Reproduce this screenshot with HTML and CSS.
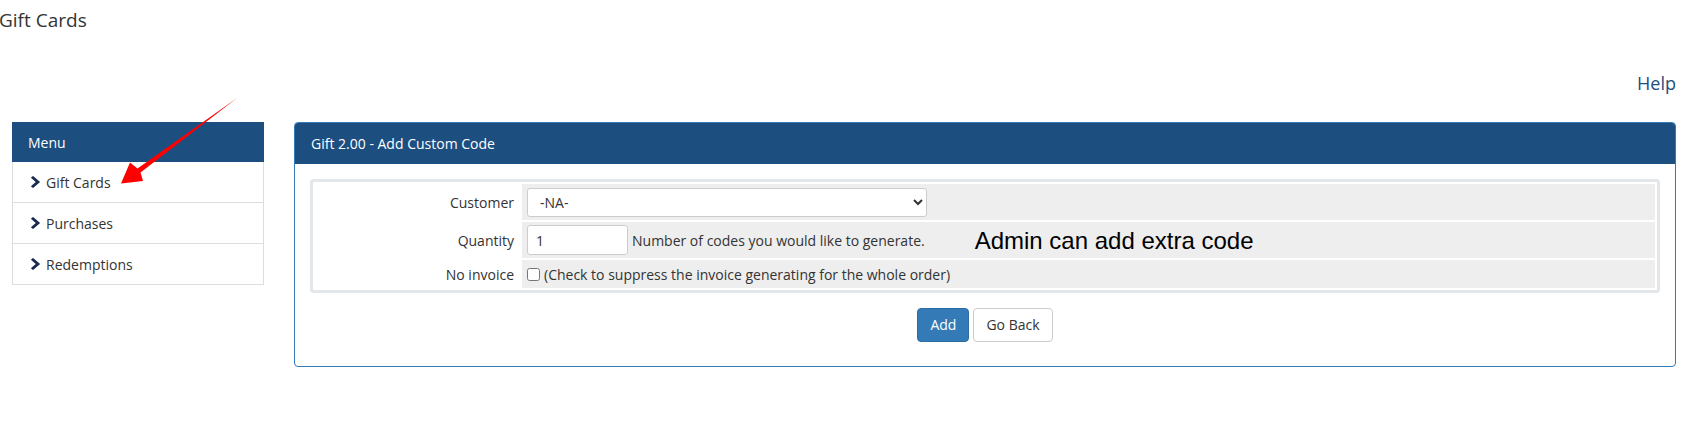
FILE: index.html
```html
<!DOCTYPE html>
<html lang="en">
<head>
<meta charset="utf-8">
<title>Gift Cards</title>
<link rel="stylesheet" href="styles.css">
</head>
<body>
<h1 class="page-title">Gift Cards</h1>
<div class="help-row"><a class="help-link" href="#">Help</a></div>
<div class="layout">
  <nav class="menu">
    <div class="menu-head">Menu</div>
    <a class="menu-item" href="#"><svg class="chev" viewBox="346 26 1036 1612" width="9" height="12" preserveAspectRatio="none"><path d="M1363 877l-742 742q-19 19-45 19t-45-19l-166-166q-19-19-19-45t19-45l531-531-531-531q-19-19-19-45t19-45l166-166q19-19 45-19t45 19l742 742q19 19 19 45t-19 45z"/></svg><span>Gift Cards</span></a>
    <a class="menu-item" href="#"><svg class="chev" viewBox="346 26 1036 1612" width="9" height="12" preserveAspectRatio="none"><path d="M1363 877l-742 742q-19 19-45 19t-45-19l-166-166q-19-19-19-45t19-45l531-531-531-531q-19-19-19-45t19-45l166-166q19-19 45-19t45 19l742 742q19 19 19 45t-19 45z"/></svg><span>Purchases</span></a>
    <a class="menu-item" href="#"><svg class="chev" viewBox="346 26 1036 1612" width="9" height="12" preserveAspectRatio="none"><path d="M1363 877l-742 742q-19 19-45 19t-45-19l-166-166q-19-19-19-45t19-45l531-531-531-531q-19-19-19-45t19-45l166-166q19-19 45-19t45 19l742 742q19 19 19 45t-19 45z"/></svg><span>Redemptions</span></a>
  </nav>
  <section class="panel">
    <div class="panel-head">Gift 2.00 - Add Custom Code</div>
    <div class="panel-body">
      <div class="form-table">
        <div class="cell-label">Customer</div>
        <div class="cell-value"><select class="select"><option>-NA-</option></select></div>
        <div class="cell-label">Quantity</div>
        <div class="cell-value"><input class="input" type="text" value="1"><span class="hint">Number of codes you would like to generate.</span><span class="annotation">Admin can add extra code</span></div>
        <div class="cell-label">No invoice</div>
        <div class="cell-value"><input class="check" type="checkbox"><span class="hint-check">(Check to suppress the invoice generating for the whole order)</span></div>
      </div>
      <div class="actions">
        <button class="btn btn-primary" type="button">Add</button>
        <button class="btn btn-default" type="button">Go Back</button>
      </div>
    </div>
  </section>
</div>
<svg class="annot-arrow" width="1684" height="427" viewBox="0 0 1684 427">
  <polygon points="237,98 140.5,172.5 143,181 121,183.5 130,162.5 137.5,168.5" />
</svg>
</body>
</html>
```

FILE: styles.css
```css
html, body {
  margin: 0;
  padding: 0;
}
body {
  position: relative;
  background: #ffffff;
  font-family: "Open Sans", "Noto Sans", "Liberation Sans", sans-serif;
  font-size: 14px;
  color: #333333;
  width: 1684px;
  height: 427px;
  overflow: hidden;
}
.page-title {
  margin: 0 0 0 -1px;
  padding-top: 9px;
  font-size: 19px;
  line-height: 22px;
  font-weight: 400;
  color: #333333;
}
.help-row {
  margin-top: 42px;
  padding-right: 8px;
  text-align: right;
  font-size: 18px;
  line-height: 20px;
}
.help-link {
  color: #1c4e80;
  text-decoration: none;
}
.layout {
  display: flex;
  align-items: flex-start;
  gap: 30px;
  margin-top: 29px;
  padding: 0 8px 0 12px;
}
.menu {
  width: 252px;
  flex: none;
  display: flex;
  flex-direction: column;
}
.menu-head {
  height: 40px;
  background: #1c4e80;
  color: #ffffff;
  padding-left: 16px;
  display: flex;
  align-items: center;
  font-size: 14px;
}
.menu-item {
  height: 40px;
  border: 1px solid #dddddd;
  border-top: none;
  display: flex;
  align-items: center;
  gap: 6px;
  padding-left: 18px;
  color: #333333;
  text-decoration: none;
  font-size: 14px;
}
.chev {
  fill: #182a50;
  flex: none;
}
.panel {
  flex: 1;
  border: 1px solid #337ab7;
  border-radius: 4px;
  overflow: hidden;
}
.panel-head {
  background: #1c4e80;
  color: #ffffff;
  height: 41px;
  padding: 0 16px;
  display: flex;
  align-items: center;
  font-size: 14px;
}
.panel-body {
  padding: 15px 15px 24px 15px;
}
.form-table {
  border: 3px solid #e3e7ea;
  border-radius: 4px;
  padding: 2px;
  display: grid;
  grid-template-columns: 205px 1fr;
  grid-template-rows: 36px 36px 28px;
  gap: 2px;
}
.cell-label {
  display: flex;
  align-items: center;
  justify-content: flex-end;
  padding-right: 6px;
  font-size: 14px;
  color: #333333;
}
.cell-value {
  background: #eeeeee;
  display: flex;
  align-items: center;
  padding-left: 5px;
  font-size: 14px;
}
.select {
  width: 400px;
  height: 29px;
  border: 1px solid #cccccc;
  border-radius: 3px;
  background: #ffffff;
  padding: 0 8px;
  font-family: "Open Sans", "Noto Sans", sans-serif;
  font-size: 14px;
  color: #333333;
  margin-top: 1px;
}
.input {
  box-sizing: border-box;
  width: 101px;
  height: 30px;
  border: 1px solid #cccccc;
  border-radius: 3px;
  padding: 0 8px;
  font-family: "Open Sans", "Noto Sans", sans-serif;
  font-size: 14px;
  color: #333333;
  background: #ffffff;
}
.hint {
  margin-left: 4px;
  color: #333333;
}
.annotation {
  margin-left: 50px;
  font-family: "Liberation Sans", Arial, sans-serif;
  font-size: 24px;
  color: #000000;
  margin-top: 2px;
}
.check {
  width: 13px;
  height: 13px;
  margin: 0 4px 0 0;
}
.hint-check {
  color: #333333;
}
.actions {
  display: flex;
  justify-content: center;
  gap: 4px;
  margin-top: 15px;
}
.btn {
  font-family: "Open Sans", "Noto Sans", sans-serif;
  font-size: 14px;
  line-height: 20px;
  padding: 6px 12px;
  border-radius: 4px;
  cursor: pointer;
}
.btn-primary {
  background: #337ab7;
  border: 1px solid #2e6da4;
  color: #ffffff;
}
.btn-default {
  background: #ffffff;
  border: 1px solid #cccccc;
  color: #333333;
}
.annot-arrow {
  position: absolute;
  left: 0;
  top: 0;
  pointer-events: none;
}
.annot-arrow polygon {
  fill: #ff0000;
}
```
